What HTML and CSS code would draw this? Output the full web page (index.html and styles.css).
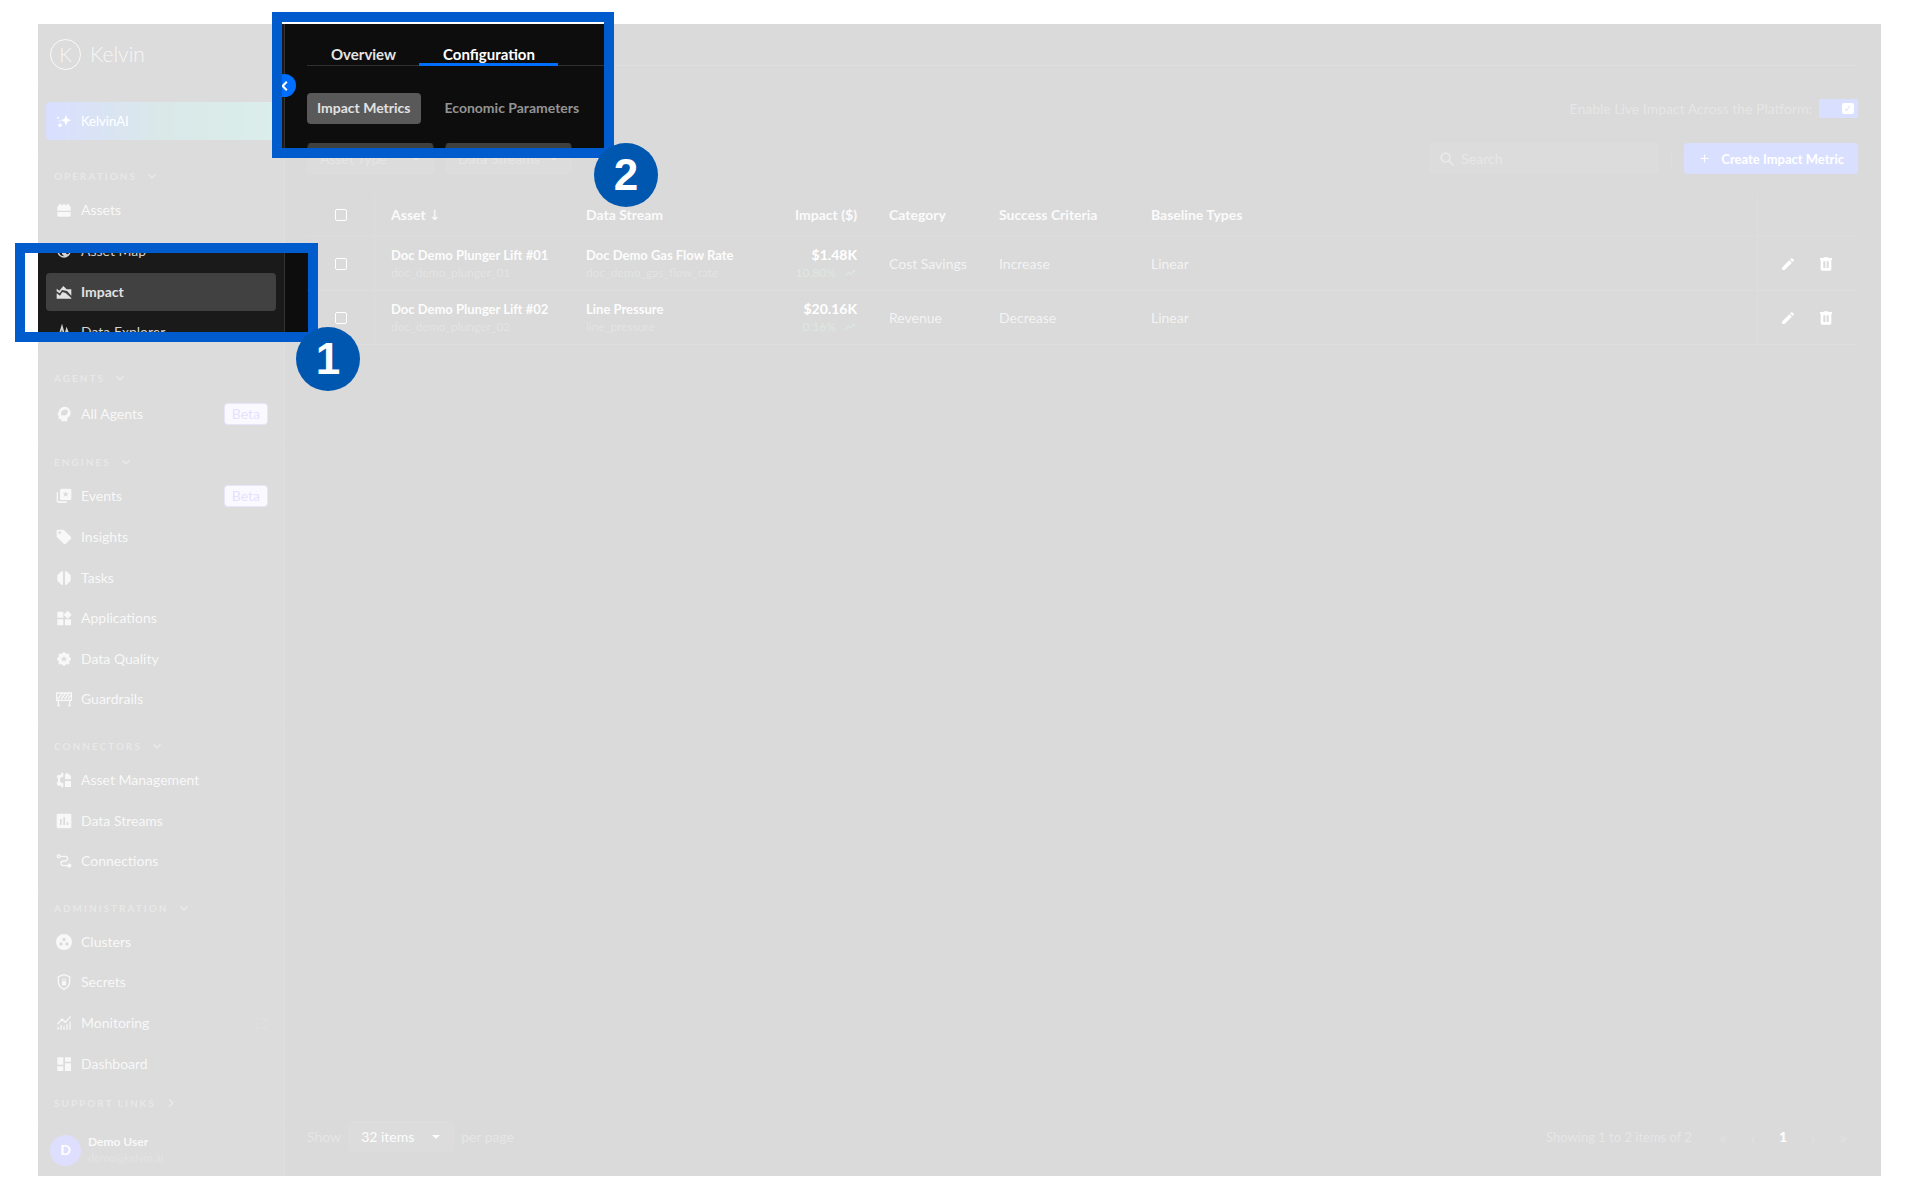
FILE: index.html
```html
<!DOCTYPE html>
<html lang="en">
<head>
<meta charset="utf-8">
<meta name="viewport" content="width=device-width, initial-scale=1">
<title>Kelvin – Impact configuration</title>
<link rel="stylesheet" href="styles.css">
</head>
<body>
<svg class="sprite" aria-hidden="true">
  <symbol id="chevron" viewBox="0 0 10 10"><path d="M2 3.5l3 3 3-3" fill="none" stroke="currentColor" stroke-width="1.4"/></symbol>
  <symbol id="pencil" viewBox="0 0 24 24"><path d="M3 17.46V20.5c0 .28.22.5.5.5h3.04c.13 0 .26-.05.35-.15L17.81 9.94l-3.75-3.75L3.15 17.1c-.1.1-.15.22-.15.36zM20.71 7.04a1 1 0 0 0 0-1.41l-2.34-2.34a1 1 0 0 0-1.41 0l-1.83 1.83 3.75 3.75z"/></symbol>
  <symbol id="trash" viewBox="0 0 24 24"><path fill-rule="evenodd" d="M3 3h5l1-1h6l1 1h5v3h-1v14a2 2 0 0 1-2 2H6a2 2 0 0 1-2-2V6H3zm5 5v10h3V8zm5 0v10h3V8z"/></symbol>
  <symbol id="trend" viewBox="0 0 24 24"><path d="M16 6l2.29 2.29-4.88 4.88-4-4L2 16.59 3.41 18l6-6 4 4 6.3-6.29L22 12V6z"/></symbol>
</svg>

<div class="stage">
  <div class="app">
    <aside class="sidebar">
      <header class="brand">
        <span class="brand-mark">K</span>
        <span class="brand-name">Kelvin</span>
      </header>
      <div class="assistant">
        <a class="assistant-link" href="#">
          <svg class="icon" viewBox="0 0 24 24"><path d="M15 3l2.2 5.8L23 11l-5.800 2.200L15 19l-2.200-5.800L7 11l5.800-2.200z"/><circle cx="6" cy="18.500" r="2.600"/><circle cx="3" cy="7" r="1.500"/><circle cx="5" cy="12" r="1"/></svg>
          KelvinAI
        </a>
      </div>
      <nav class="nav">
        <section class="group group-4">
          <h2>Operations <svg class="chevron"><use href="#chevron"/></svg></h2>
          <ul>
            <li><a href="#"><svg class="icon" viewBox="0 0 24 24"><path d="M2 13V8q0-2 2-2V4q2-2 4 0v1h2V4q2-2 4 0v1h2V4q2-2 4 0v2q2 0 2 2v5zM2 15h20v5q0 2-2 2H4q-2 0-2-2z"/></svg>Assets</a></li>
            <li><a href="#"><svg class="icon" viewBox="0 0 24 24"><path d="M12 2a10 10 0 1 0 0 20 10 10 0 0 0 0-20zm-1 17.930A8 8 0 0 1 4.210 10.200L9 15v1a2 2 0 0 0 2 2zm6.900-2.530A2 2 0 0 0 16 16h-1v-3a1 1 0 0 0-1-1H8v-2h2a1 1 0 0 0 1-1V7h2a2 2 0 0 0 2-2v-.410a8 8 0 0 1 2.900 12.810z"/></svg>Asset Map</a></li>
            <li><a class="current" href="#" aria-current="page"><svg class="icon" viewBox="0 0 24 24"><path d="M1 7l4 3 6-7 5 5h7v9.500l-6.500-7L9 9 5.500 14 1 11z"/><path d="M1 14l5 3.500L9.500 12l5 1.500L23 21v1H1z"/></svg>Impact</a></li>
            <li><a href="#"><svg class="icon" viewBox="0 0 24 24"><path d="M1 14h5l3-10 4 15 3-11 3 8 1-2h3" fill="none" stroke="currentColor" stroke-width="2.500"/></svg>Data Explorer</a></li>
          </ul>
        </section>
        <section class="group group-1">
          <h2>Agents <svg class="chevron"><use href="#chevron"/></svg></h2>
          <ul>
            <li><a href="#"><svg class="icon" viewBox="0 0 24 24"><path fill-rule="evenodd" d="M13 1a9 9 0 0 0-9 8l-2 4q-.5 1 1 1h1v4q0 2 2 2h2v3h9v-5a9 9 0 0 0-4-17zM8 15q-2-7 3-9t7 1q0 5-4 7-3 1-4-1z"/></svg>All Agents<span class="beta">Beta</span></a></li>
          </ul>
        </section>
        <section class="group group-6">
          <h2>Engines <svg class="chevron"><use href="#chevron"/></svg></h2>
          <ul>
            <li><a href="#"><svg class="icon" viewBox="0 0 24 24"><path fill-rule="evenodd" d="M8 1h13a2 2 0 0 1 2 2v13a2 2 0 0 1-2 2H8a2 2 0 0 1-2-2V3a2 2 0 0 1 2-2zm6.500 4l-1.300 3H10l2.500 2-1 3 3-1.800 3 1.800-1-3L19 8h-3.200z"/><path d="M1 7q0-1 2-1v14h14q0 2-2 2.500H4q-3 0-3-3z"/></svg>Events<span class="beta">Beta</span></a></li>
            <li><a href="#"><svg class="icon" viewBox="0 0 24 24"><path fill-rule="evenodd" d="M1 3a2 2 0 0 1 2-2h8.500l11 11q1 1.300 0 2.500l-8 8q-1.300 1-2.500 0L1 11.500zm4.500.5a2 2 0 1 0 0 4 2 2 0 0 0 0-4z"/></svg>Insights</a></li>
            <li><a href="#"><svg class="icon" viewBox="0 0 24 24"><path d="M10.500 2v20H8l-6-6V8l6-6zM13.500 2H16l6 6v8l-6 6h-2.500z"/></svg>Tasks</a></li>
            <li><a href="#"><svg class="icon" viewBox="0 0 24 24"><path d="M2 2.500h9v9H2zM2 14h9v9H2zM13.500 14h9v9h-9zM17.500 1l6 6-6 6-6-6z"/></svg>Applications</a></li>
            <li><a href="#"><svg class="icon" viewBox="0 0 24 24"><path fill-rule="evenodd" d="M12 1l3.200 3H20v4.800l3 3.200-3 3.200V20h-4.800L12 23l-3.200-3H4v-4.800L1 12l3-3.200V4h4.800zm0 6l-1.500 3.500H7l2.700 2.200-1 3.500L12 14.300l3.300 1.900-1-3.500 2.700-2.200h-3.500z"/></svg>Data Quality</a></li>
            <li><a href="#"><svg class="icon" viewBox="0 0 24 24"><path d="M1 3h22v11H1zM3.500 14v8M20.500 14v8M2 22h4M18 22h4M3 12l6-8M8 12l6-8M13 12l6-8M18 12l4-6" fill="none" stroke="currentColor" stroke-width="2"/></svg>Guardrails</a></li>
          </ul>
        </section>
        <section class="group group-3">
          <h2>Connectors <svg class="chevron"><use href="#chevron"/></svg></h2>
          <ul>
            <li><a href="#"><svg class="icon" viewBox="0 0 24 24"><path d="M11 1v6a5 5 0 0 0 0 10v6H8l-1-3-4 1-2-4 2-3v-4L1 7l2-3 4 1 1-4zM13.500 11V4l3-3 6 5v5zM13.500 13.500h9v9h-9z"/></svg>Asset Management</a></li>
            <li><a href="#"><svg class="icon" viewBox="0 0 24 24"><path fill-rule="evenodd" d="M3 1h18a2 2 0 0 1 2 2v18a2 2 0 0 1-2 2H3a2 2 0 0 1-2-2V3a2 2 0 0 1 2-2zm3 8v9h2.500V9zm5-3v12h2.500V6zm5 8v4h2.500v-4z"/></svg>Data Streams</a></li>
            <li><a href="#"><svg class="icon" viewBox="0 0 24 24"><path d="M6 5h8a3.500 3.500 0 0 1 0 7h-3a3.500 3.500 0 0 0 0 7h7" fill="none" stroke="currentColor" stroke-width="2"/><circle cx="4" cy="5" r="2.200" fill="none" stroke="currentColor" stroke-width="2"/><circle cx="20" cy="19" r="3.200"/></svg>Connections</a></li>
          </ul>
        </section>
        <section class="group group-4">
          <h2>Administration <svg class="chevron"><use href="#chevron"/></svg></h2>
          <ul>
            <li><a href="#"><svg class="icon" viewBox="0 0 24 24"><path fill-rule="evenodd" d="M12 0a12 12 0 1 0 0 24 12 12 0 0 0 0-24zm0 5.500a2.600 2.600 0 1 1 0 5.200 2.600 2.600 0 0 1 0-5.200zm-4.500 7a2.600 2.600 0 1 1 0 5.200 2.600 2.600 0 0 1 0-5.200zm9 0a2.600 2.600 0 1 1 0 5.200 2.600 2.600 0 0 1 0-5.200z"/></svg>Clusters</a></li>
            <li><a href="#"><svg class="icon" viewBox="0 0 24 24"><path d="M12 1l8.500 3v8q0 7-8.500 11Q3.500 19 3.500 12V4z" fill="none" stroke="currentColor" stroke-width="2"/><path d="M9 11h6v6H9z"/><path d="M10 11V9.500a2 2 0 0 1 4 0V11" fill="none" stroke="currentColor" stroke-width="1.400"/></svg>Secrets</a></li>
            <li><a href="#"><svg class="icon" viewBox="0 0 24 24"><path d="M2 14l7-8 5 5 8-9M3 22v-4M7.500 22v-7M12 22v-5M16.500 22v-8M21 22V10" fill="none" stroke="currentColor" stroke-width="2"/></svg>Monitoring<svg class="external" viewBox="0 0 24 24"><path d="M10 3H3v18h18v-7M14 3h7v7M21 3L10 14" fill="none" stroke="currentColor" stroke-width="2"/></svg></a></li>
            <li><a href="#"><svg class="icon" viewBox="0 0 24 24"><path d="M2 2h9v11H2zM2 15.500h9v7H2zM13.500 2h9v6.500h-9zM13.500 11h9v11.500h-9z"/></svg>Dashboard</a></li>
          </ul>
        </section>
      </nav>
      <div class="support">Support links <svg class="chevron chevron-right"><use href="#chevron"/></svg></div>
      <footer class="user">
        <span class="avatar">D</span>
        <div class="user-text">
          <strong>Demo User</strong>
          <span>demo@kelvin.ai</span>
        </div>
      </footer>
      <button class="collapse" type="button" aria-label="Collapse sidebar"><svg viewBox="0 0 10 10"><path d="M6.500 1.500L3 5l3.500 3.500" fill="none" stroke="currentColor" stroke-width="1.800"/></svg></button>
    </aside>

    <main class="main">
      <nav class="tabs">
        <a href="#">Overview</a>
        <a class="active" href="#">Configuration</a>
      </nav>
      <div class="bar">
        <div class="segments">
          <button class="segment selected" type="button">Impact Metrics</button>
          <button class="segment" type="button">Economic Parameters</button>
        </div>
        <div class="live">
          <label for="live">Enable Live Impact Across the Platform:</label>
          <input class="switch" id="live" type="checkbox" role="switch" checked>
        </div>
      </div>
      <div class="bar filters">
        <div class="filter-set">
          <span class="select"><select aria-label="Asset type"><option>Asset Type</option></select></span>
          <span class="select"><select aria-label="Data streams"><option>Data Streams</option></select></span>
        </div>
        <div class="actions">
          <label class="search">
            <svg viewBox="0 0 24 24"><path d="M15 15l8 8" fill="none" stroke="currentColor" stroke-width="3"/><circle cx="9.500" cy="9.500" r="7.500" fill="none" stroke="currentColor" stroke-width="3"/></svg>
            <input type="search" placeholder="Search" aria-label="Search">
          </label>
          <span class="divider"></span>
          <button class="create" type="button"><svg viewBox="0 0 10 10"><path d="M5 .5v9M.5 5h9" stroke="currentColor" stroke-width="1.200"/></svg>Create Impact Metric</button>
        </div>
      </div>

      <table>
        <colgroup>
          <col class="c-check"><col class="c-asset"><col class="c-stream"><col class="c-impact"><col class="c-category"><col class="c-success"><col><col class="c-actions">
        </colgroup>
        <thead>
          <tr>
            <th class="check"><input type="checkbox" aria-label="Select all"></th>
            <th class="asset sorted">Asset <span class="sort">↓</span></th>
            <th>Data Stream</th>
            <th class="impact">Impact ($)</th>
            <th>Category</th>
            <th>Success Criteria</th>
            <th>Baseline Types</th>
            <th class="row-actions"></th>
          </tr>
        </thead>
        <tbody>
          <tr>
            <td class="check"><input type="checkbox" aria-label="Select row 1"></td>
            <td class="asset"><b>Doc Demo Plunger Lift #01</b><small>doc_demo_plunger_01</small></td>
            <td><b>Doc Demo Gas Flow Rate</b><small>doc_demo_gas_flow_rate</small></td>
            <td class="impact"><b>$1.48K</b><small>10.80% <svg><use href="#trend"/></svg></small></td>
            <td>Cost Savings</td>
            <td>Increase</td>
            <td>Linear</td>
            <td class="row-actions"><div><button type="button" aria-label="Edit"><svg><use href="#pencil"/></svg></button><button type="button" aria-label="Delete"><svg><use href="#trash"/></svg></button></div></td>
          </tr>
          <tr>
            <td class="check"><input type="checkbox" aria-label="Select row 2"></td>
            <td class="asset"><b>Doc Demo Plunger Lift #02</b><small>doc_demo_plunger_02</small></td>
            <td><b>Line Pressure</b><small>line_pressure</small></td>
            <td class="impact"><b>$20.16K</b><small>0.16% <svg><use href="#trend"/></svg></small></td>
            <td>Revenue</td>
            <td>Decrease</td>
            <td>Linear</td>
            <td class="row-actions"><div><button type="button" aria-label="Edit"><svg><use href="#pencil"/></svg></button><button type="button" aria-label="Delete"><svg><use href="#trash"/></svg></button></div></td>
          </tr>
        </tbody>
      </table>

      <footer class="pager">
        <div class="page-size">
          <label for="size">Show</label>
          <span class="select select-size"><select id="size"><option>32 items</option></select></span>
          <span>per page</span>
        </div>
        <div class="pages">
          <span class="range">Showing 1 to 2 items of 2</span>
          <button type="button">«</button>
          <button type="button">‹</button>
          <button class="page" type="button">1</button>
          <button type="button">›</button>
          <button type="button">»</button>
        </div>
      </footer>
    </main>
  </div>

  <div class="veil"></div>
  <div class="frame frame-menu"></div>
  <div class="frame frame-tabs"></div>
  <span class="step step-1">1</span>
  <span class="step step-2">2</span>
</div>
</body>
</html>
```
FILE: styles.css
```css
* { box-sizing: border-box; }

body {
  margin: 0;
  padding: 24px 39px 24px 38px;
  background: #fff;
  font: 14px/20px Lato, "Liberation Sans", sans-serif;
}

a { color: inherit; text-decoration: none; }
button, select, input { font: inherit; color: inherit; }
button { border: 0; padding: 0; background: none; }
svg { fill: currentColor; }
.sprite { position: absolute; width: 0; height: 0; }

.stage { position: relative; }

.app {
  display: flex;
  min-height: calc(100vh - 48px);
  background: #0d0d0d;
  color: #d2d2d2;
}

/* Sidebar */
.sidebar {
  position: relative;
  display: flex;
  flex-direction: column;
  flex: none;
  width: 247px;
  background: #1a1a1a;
  border-right: 1px solid #333;
}

.brand {
  display: flex;
  align-items: center;
  gap: 9px;
  height: 63px;
  padding: 0 12px 2px;
  border-bottom: 1px solid #262626;
  color: #c8c8c8;
}
.brand-mark {
  display: grid;
  place-items: center;
  width: 31px;
  height: 31px;
  border: 1px solid #e0e0e0;
  border-radius: 50%;
  font-size: 20px;
  font-weight: 300;
}
.brand-name { font-size: 21px; font-weight: 300; }

.assistant { padding: 15px 8px 16px; }
.assistant-link {
  display: flex;
  align-items: center;
  gap: 9px;
  height: 38px;
  padding: 0 10px;
  border-radius: 4px;
  background: linear-gradient(90deg, #0930ff, #0f6a6a 50%, #0d9080);
  color: #fff;
  font-size: 13px;
}

.icon { flex: none; width: 16px; height: 16px; }
.chevron { width: 12px; height: 12px; }
.chevron-right { transform: rotate(-90deg); }

.nav { display: flex; flex: 1; flex-direction: column; }
.group {
  display: flex;
  flex-direction: column;
  padding-bottom: 6px;
  border-top: 1px solid #262626;
}
.group:last-child { padding-bottom: 0; }
.group-1 { flex: 1 0 auto; }
.group-3 { flex: 3 0 auto; }
.group-4 { flex: 4 0 auto; }
.group-6 { flex: 6 0 auto; }
.group-1 li { min-height: 43px; }

.group h2, .support {
  display: flex;
  align-items: center;
  gap: 9px;
  margin: 0;
  padding: 0 16px;
  font-size: 10px;
  font-weight: 700;
  letter-spacing: 2px;
  text-transform: uppercase;
  color: #6a6a6a;
}
.group h2 { height: 33px; padding-top: 5px; }
.support { height: 39px; padding-bottom: 2px; }

.group ul {
  display: flex;
  flex: 1;
  flex-direction: column;
  margin: 0;
  padding: 0 8px;
  list-style: none;
}
.group li { display: flex; flex: 1 0 40px; align-items: center; }
.group li a {
  display: flex;
  flex: 1;
  align-items: center;
  gap: 9px;
  height: 38px;
  padding: 0 8px 0 10px;
  border-radius: 4px;
}
.group li a.current { background: #414141; font-weight: 700; color: #e2e2e2; }

.beta {
  margin-left: auto;
  padding: 0 7px;
  border: 1px solid #6b55e0;
  border-radius: 4px;
  background: #dad5ff;
  color: #5a30f2;
}
.external { width: 13px; height: 13px; margin-left: auto; color: #333; }

.user {
  display: flex;
  align-items: center;
  gap: 7px;
  height: 53px;
  padding: 0 12px;
  border-top: 1px solid #262626;
}
.avatar {
  display: grid;
  place-items: center;
  width: 31px;
  height: 31px;
  border-radius: 50%;
  background: #2a2cff;
  color: #fff;
  font-weight: 700;
}
.user-text { display: grid; font-size: 12px; line-height: 16px; }
.user-text span { font-size: 11px; color: #4c4c4c; }

.collapse {
  position: absolute;
  top: 50px;
  right: -12px;
  display: grid;
  place-items: center;
  width: 23px;
  height: 23px;
  border-radius: 50%;
  background: #006fff;
  color: #fff;
}
.collapse svg { width: 12px; height: 12px; }

/* Main */
.main {
  display: flex;
  flex: 1;
  flex-direction: column;
  min-width: 0;
  padding: 0 23px 0 22px;
}

.tabs {
  display: flex;
  height: 42px;
  padding-top: 18px;
  margin-bottom: 27px;
  border-bottom: 1px solid #303030;
  font-size: 15px;
  font-weight: 700;
  color: #e4e4e4;
}
.tabs a { height: 24px; padding: 2px 23px 0 24px; }
.tabs .active { border-bottom: 3px solid #006fff; color: #fff; }

.bar { display: flex; align-items: center; justify-content: space-between; height: 31px; }
.segments, .live, .filter-set, .actions, .page-size, .pages { display: flex; align-items: center; }
.segments { gap: 14px; }
.segment {
  height: 31px;
  padding: 0 10px 2px;
  border-radius: 4px;
  font-weight: 700;
  color: #949494;
}
.segment.selected { background: #595959; color: #e2e2e2; }

.live { gap: 7px; color: #5c5c5c; }
.switch {
  appearance: none;
  width: 39px;
  height: 19px;
  margin: 0;
  padding: 4px;
  border-radius: 2px;
  background: #0930ff;
}
.switch::before {
  content: "✓";
  display: block;
  width: 12px;
  height: 11px;
  margin-left: auto;
  border-radius: 2px;
  background: #fff;
  color: #0930ff;
  font: 700 10px/11px "DejaVu Sans", sans-serif;
  text-align: center;
}

.filters { margin-top: 19px; }
.filter-set { gap: 11px; }
.select { position: relative; display: block; width: 127px; color: #5a5a5a; }
.select select {
  appearance: none;
  width: 100%;
  height: 31px;
  padding: 0 12px;
  border: 1px solid #262626;
  border-top-color: #404040;
  border-radius: 4px;
  background: linear-gradient(#404040 5px, #1c1c1c 5px);
}
.select::after {
  content: "";
  position: absolute;
  top: 14px;
  right: 14px;
  border: 4px solid transparent;
  border-top-color: currentColor;
}

.actions { gap: 12px; }
.search {
  display: flex;
  align-items: center;
  gap: 7px;
  width: 230px;
  height: 31px;
  padding: 0 11px;
  border-radius: 4px;
  background: #1a1a1a;
  color: #707070;
}
.search svg { flex: none; width: 14px; height: 14px; }
.search input { width: 100%; padding: 0; border: 0; background: none; outline: 0; }
.search input::placeholder { color: #666; }
.divider { width: 1px; height: 18px; background: #222; }
.create {
  display: flex;
  align-items: center;
  gap: 12px;
  height: 31px;
  padding: 0 14px 0 16px;
  border-radius: 4px;
  background: #0930ff;
  color: #fff;
  font-size: 13px;
  font-weight: 700;
}
.create svg { width: 9px; height: 9px; }

table {
  width: 100%;
  margin-top: 20px;
  border-collapse: separate;
  border-spacing: 0;
  table-layout: fixed;
}
.c-check { width: 67px; }
.c-asset { width: 196px; }
.c-stream { width: 204px; }
.c-impact { width: 99px; }
.c-category { width: 110px; }
.c-success { width: 152px; }
.c-actions { width: 101px; }
th, td {
  padding: 0 16px;
  border-bottom: 1px solid #222;
  text-align: left;
  white-space: nowrap;
}
th { height: 43px; color: #e0e0e0; font-weight: 700; }
td { height: 54px; color: #b4b4b4; }
.sorted { background: #131313; }
.asset { border-left: 1px solid #222; }
.sort { font: 14px/14px "DejaVu Sans", sans-serif; }
.check { padding: 0; text-align: center; }
.check input {
  appearance: none;
  display: block;
  width: 12px;
  height: 12px;
  margin: 0 auto;
  border: 1px solid #fff;
  border-radius: 2px;
}
td b, td small { display: block; }
td b { font-size: 13px; color: #ececec; line-height: 18px; }
td small { font-size: 12px; line-height: 18px; color: #4c4c4c; }
.impact { text-align: right; }
.impact b { font-size: 14px; color: #fff; }
.impact small { color: #2c6c3c; }
.impact small svg { width: 14px; height: 12px; margin-left: 4px; vertical-align: middle; }
.row-actions { padding: 0; border-left: 1px solid #222; color: #fff; }
.row-actions div { display: flex; gap: 22px; padding-left: 22px; }
.row-actions button { display: grid; color: #fff; }
.row-actions svg { width: 16px; height: 16px; }

.pager {
  display: flex;
  align-items: center;
  justify-content: space-between;
  margin-top: auto;
  padding-bottom: 24px;
  color: #5c5c5c;
}
.page-size { gap: 7px; }
.select-size { width: 106px; color: #e8e8e8; }
.select-size select { border-color: #222; background: #1a1a1a; }
.pages button { width: 30px; color: #3c3c3c; font-size: 18px; }
.pages .page { color: #fff; font-size: 14px; font-weight: 700; }
.range { margin-right: 16px; font-size: 13px; }

/* Walkthrough layer: the veil leaves the two highlighted regions clear */
.veil {
  position: absolute;
  inset: 0;
  background: rgba(255, 255, 255, .847);
  clip-path: polygon(evenodd,
    0 0, 100% 0, 100% 100%, 0 100%, 0 0,
    244px 0, 566px 0, 566px 124px, 244px 124px, 244px 0, 0 0,
    0 229px, 270px 229px, 270px 308px, 0 308px, 0 229px, 0 0);
}
.frame { position: absolute; border: 10px solid #005bcd; }
.frame-menu { top: 219px; left: -23px; width: 303px; height: 99px; }
.frame-tabs { top: -12px; left: 234px; width: 342px; height: 146px; }
.step {
  position: absolute;
  display: grid;
  place-items: center;
  width: 64px;
  height: 64px;
  border-radius: 50%;
  background: #0057b0;
  color: #fff;
  font: 700 44px/64px "Liberation Sans Narrow", "Liberation Sans", sans-serif;
}
.step-1 { top: 303px; left: 258px; }
.step-2 { top: 119px; left: 556px; }
```
